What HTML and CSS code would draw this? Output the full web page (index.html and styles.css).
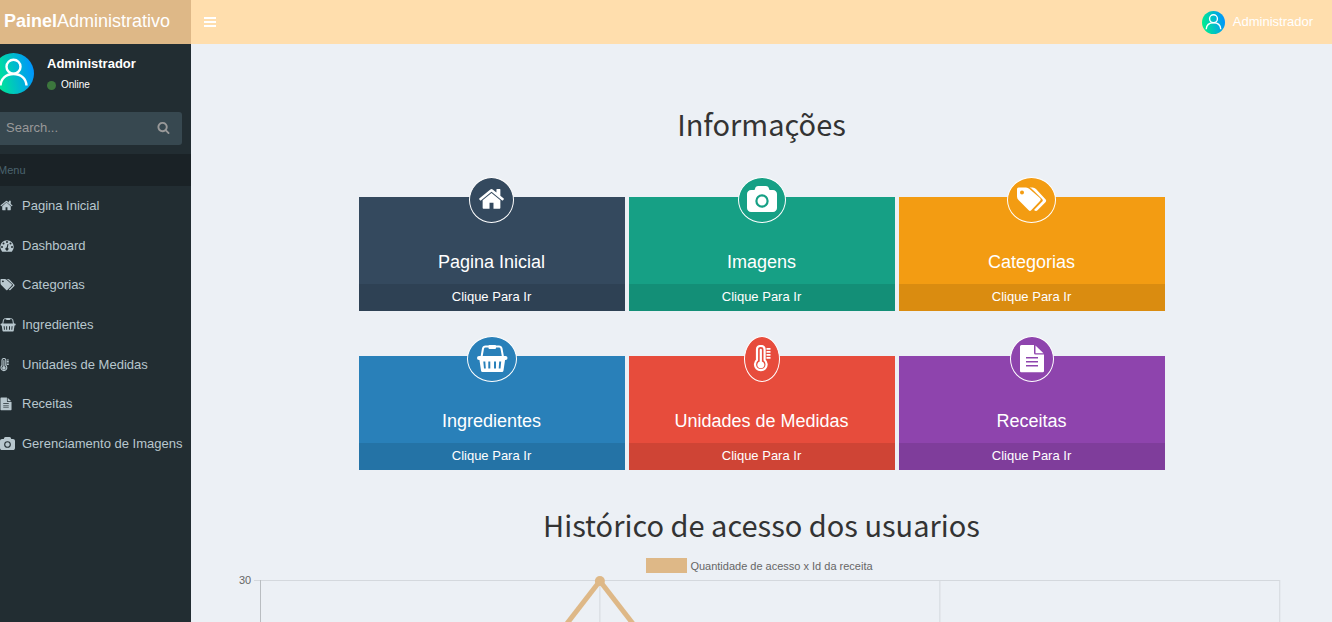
FILE: index.html
```html
<!DOCTYPE html>
<html lang="pt-BR">
<head>
<meta charset="utf-8">
<meta name="viewport" content="width=device-width, initial-scale=1">
<title>Painel Administrativo</title>
<link rel="stylesheet" href="styles.css">
</head>
<body>
<svg class="defs" aria-hidden="true">
  <defs>
    <linearGradient id="avatar-fill" x1="0" y1="0.6" x2="1" y2="0.4">
      <stop offset="0" stop-color="#00ef8b"/>
      <stop offset="1" stop-color="#0093ff"/>
    </linearGradient>
    <symbol id="avatar" viewBox="0 0 41 41">
      <circle cx="20.5" cy="20.5" r="20.5" fill="url(#avatar-fill)"/>
      <g fill="none" stroke="#fff" stroke-width="2.400"><circle cx="20.5" cy="13.700" r="7"/><path d="M7.500 32.500C8 25.500 13 21 20.500 21S33 25.500 33.500 32.500"/></g>
    </symbol>
    <symbol id="home" viewBox="18 58 1755 1820">
      <path d="M1472 992v480q0 26-19 45t-45 19h-384v-384h-256v384h-384q-26 0-45-19t-19-45v-480q0-1 .5-3t.5-3l575-474 575 474q1 2 1 6zm223-69l-62 74q-8 9-21 11h-3q-13 0-21-7l-692-577-692 577q-12 8-24 7-13-2-21-11l-62-74q-8-10-7-23.500t11-21.500l719-599q32-26 76-26t76 26l244 204v-195q0-14 9-23t23-9h192q14 0 23 9t9 23v408l219 182q10 8 11 21.500t-7 23.500z"/>
    </symbol>
    <symbol id="camera" viewBox="-64 128 1920 1792">
      <path fill-rule="evenodd" d="M1600 384q106 0 181 75t75 181v896q0 106-75 181t-181 75h-1408q-106 0-181-75t-75-181v-896q0-106 75-181t181-75h224l51-136q19-49 69.500-84.500t103.500-35.500h512q53 0 103.500 35.500t69.500 84.500l51 136zM896 660a428 428 0 1 0 0 856a428 428 0 1 0 0-856zM896 800a288 288 0 1 1 0 576a288 288 0 1 1 0-576z"/>
    </symbol>
    <symbol id="tags" viewBox="0 0 31 28">
      <path fill-rule="evenodd" d="M2.500 1.500H10Q12 1.500 13.500 3L24.200 12.300Q25.300 13.500 24.200 14.800L15.200 24.300Q14 25.500 12.700 24.300L2.500 14Q1 12.500 1 10.500V3Q1 1.500 2.500 1.500zM6 4.500a2 2 0 1 0 0 4a2 2 0 1 0 0-4z"/>
      <path d="M13.500 1.500H16.500Q18.500 1.500 20 3L29.700 13.500Q30.700 14.700 29.700 16L21.500 24.300Q20 25.600 18 24L26.500 15.300Q27.300 14.300 26.300 13.200L17 4Q15.500 2.200 13.500 1.500z"/>
    </symbol>
    <symbol id="basket" viewBox="0 0 32 28">
      <path fill="none" stroke="currentColor" stroke-width="2" d="M5.500 12L7 3.500Q7.500 1.500 9.500 1.500H23Q25 1.500 25.500 3.500L27 12"/>
      <rect x="12.500" y="0" width="7.500" height="4" rx="1"/>
      <rect x="1" y="11" width="30.500" height="4" rx="2"/>
      <path fill-rule="evenodd" d="M3.300 14H29.200L27.500 25.500Q27.300 27 26 27H6.500Q5.200 27 5 25.500zM7.300 16.500L8 23.500H9.800L9.300 16.500zM12.300 16.500V23.500H14.300V16.500zM18 16.500V23.500H20V16.500zM23.200 16.500L22.700 23.500H24.500L25.200 16.500z"/>
    </symbol>
    <symbol id="thermometer" viewBox="0 0 18 28">
      <path fill="none" stroke="currentColor" stroke-width="2.200" d="M4 15V4.500Q4 1 7.800 1T11.600 4.500V15A5.800 5.800 0 1 1 4 15z"/>
      <path d="M6.700 5Q6.700 3.800 7.800 3.800T8.900 5V16.500A3.500 3.500 0 1 1 6.700 16.500zM13.500 3H17.500V4.800H13.500zM13.500 6H17.500V7.800H13.500zM13.500 9H17.500V10.800H13.500zM13.500 12H17.500V13.800H13.500z"/>
    </symbol>
    <symbol id="file" viewBox="0 0 26 28">
      <path fill-rule="evenodd" d="M2.500 0H15V8Q15 9.500 16.500 9.500H25V26Q25 27.300 23.700 27.300H2.300Q1 27.300 1 26V1.500Q1 0 2.500 0zM7 12V13.500H19V12zM7 16V17.500H19V16zM7 20V21.500H19V20z"/>
      <path d="M16.500 .5L24.500 8.200H16.500z"/>
    </symbol>
    <symbol id="dashboard" viewBox="0 0 28 28">
      <path fill-rule="evenodd" d="M4 25A13.500 13.500 0 1 1 24 25Q23.500 25.500 22.800 25.500H5.200Q4.500 25.500 4 25zM4 14a2 2 0 1 0 0 4a2 2 0 1 0 0-4zM7 7a2 2 0 1 0 0 4a2 2 0 1 0 0-4zM14 4a2 2 0 1 0 0 4a2 2 0 1 0 0-4zM21 7a2 2 0 1 0 0 4a2 2 0 1 0 0-4zM24 14a2 2 0 1 0 0 4a2 2 0 1 0 0-4zM15 10L13.300 17A3 3 0 1 0 15.500 17.500L17 10.500z"/>
    </symbol>
    <symbol id="search" viewBox="0 0 1792 1792">
      <path d="M1216 832q0-185-131.500-316.500t-316.500-131.500-316.500 131.500-131.500 316.500 131.500 316.500 316.500 131.500 316.500-131.500 131.500-316.500zm512 832q0 52-38 90t-90 38q-54 0-90-38l-343-342q-179 124-399 124-143 0-273.500-55.500t-225-150-150-225-55.500-273.500 55.500-273.500 150-225 225-150 273.500-55.500 273.500 55.500 225 150 150 225 55.500 273.500q0 220-124 399l343 343q37 37 37 90z"/>
    </symbol>
    <symbol id="bars" viewBox="0 0 12 10">
      <path d="M0 0H12V2H0zM0 4H12V6H0zM0 8H12V10H0z"/>
    </symbol>
  </defs>
</svg>

<div class="app">
  <a class="brand" href="#"><b>Painel</b>Administrativo</a>
  <header class="topbar">
    <button class="toggle" type="button" aria-label="Alternar menu"><svg width="12" height="10"><use href="#bars"/></svg></button>
    <a class="account" href="#"><svg width="23" height="23"><use href="#avatar"/></svg>Administrador</a>
  </header>

  <aside class="sidebar">
    <div class="user">
      <svg class="user-photo" width="41" height="41"><use href="#avatar"/></svg>
      <div class="user-info">
        <strong>Administrador</strong>
        <span class="status">Online</span>
      </div>
    </div>
    <form class="search">
      <input type="text" placeholder="Search..." aria-label="Search">
      <button type="button" aria-label="Buscar"><svg width="13" height="13"><use href="#search"/></svg></button>
    </form>
    <div class="menu-title">Menu</div>
    <nav class="menu">
      <a href="#"><svg width="13" height="14"><use href="#home"/></svg>Pagina Inicial</a>
      <a href="#"><svg width="14" height="14"><use href="#dashboard"/></svg>Dashboard</a>
      <a href="#"><svg width="15" height="14"><use href="#tags"/></svg>Categorias</a>
      <a href="#"><svg width="16" height="14"><use href="#basket"/></svg>Ingredientes</a>
      <a href="#"><svg width="9" height="14"><use href="#thermometer"/></svg>Unidades de Medidas</a>
      <a href="#"><svg width="12" height="14"><use href="#file"/></svg>Receitas</a>
      <a href="#"><svg width="15" height="14"><use href="#camera"/></svg>Gerenciamento de Imagens</a>
    </nav>
  </aside>

  <main class="content">
    <h1>Informações</h1>
    <section class="cards">
      <a class="card navy" href="#"><span class="badge"><svg width="27" height="28"><use href="#home"/></svg></span><span class="card-title">Pagina Inicial</span><span class="card-action">Clique Para Ir</span></a>
      <a class="card green" href="#"><span class="badge"><svg width="30" height="28"><use href="#camera"/></svg></span><span class="card-title">Imagens</span><span class="card-action">Clique Para Ir</span></a>
      <a class="card orange" href="#"><span class="badge"><svg width="31" height="28"><use href="#tags"/></svg></span><span class="card-title">Categorias</span><span class="card-action">Clique Para Ir</span></a>
      <a class="card blue" href="#"><span class="badge"><svg width="32" height="28"><use href="#basket"/></svg></span><span class="card-title">Ingredientes</span><span class="card-action">Clique Para Ir</span></a>
      <a class="card red" href="#"><span class="badge"><svg width="18" height="28"><use href="#thermometer"/></svg></span><span class="card-title">Unidades de Medidas</span><span class="card-action">Clique Para Ir</span></a>
      <a class="card purple" href="#"><span class="badge"><svg width="26" height="28"><use href="#file"/></svg></span><span class="card-title">Receitas</span><span class="card-action">Clique Para Ir</span></a>
    </section>

    <h2>Histórico de acesso dos usuarios</h2>
    <section class="chart">
      <div class="legend"><span class="swatch"></span>Quantidade de acesso x Id da receita</div>
      <div class="chart-body">
        <span class="tick">30</span>
        <svg class="plot" role="img" aria-label="Quantidade de acesso x Id da receita">
          <g class="grid-lines">
            <path d="M-6 .5H0"/>
            <line x1="0" y1=".5" x2="100%" y2=".5"/>
            <line x1="33.330%" y1="0" x2="33.330%" y2="100%"/>
            <line x1="66.670%" y1="0" x2="66.670%" y2="100%"/>
            <line x1="100%" y1="0" x2="100%" y2="100%"/>
          </g>
          <line class="axis" x1=".5" y1="0" x2=".5" y2="100%"/>
          <g class="series">
            <line x1="0" y1="440" x2="33.330%" y2="1"/>
            <line x1="33.330%" y1="1" x2="66.670%" y2="440"/>
            <circle cx="33.330%" cy="1" r="5"/>
          </g>
        </svg>
      </div>
    </section>
  </main>
</div>
</body>
</html>
```
FILE: styles.css
```css
* {
  box-sizing: border-box;
}

body {
  margin: 0;
  font: 13px/18px "Liberation Sans", Arial, sans-serif;
  color: #333;
  background: #ecf0f5;
}

a {
  color: inherit;
  text-decoration: none;
}

button {
  border: 0;
  padding: 0;
  background: none;
  color: inherit;
  cursor: pointer;
}

svg {
  display: block;
  flex: none;
  fill: currentColor;
}

.defs {
  position: absolute;
  width: 0;
  height: 0;
}

.app {
  display: grid;
  grid-template: 44px minmax(0, 1fr) / 191px minmax(0, 1fr);
  height: 100vh;
}

.brand {
  padding-left: 4px;
  background: #deb887;
  color: #fff;
  font-size: 18px;
  line-height: 42px;
  white-space: nowrap;
}

.topbar {
  display: flex;
  align-items: center;
  justify-content: space-between;
  padding: 0 19px 0 13px;
  background: #ffdead;
  color: #fff;
}

.account {
  display: flex;
  align-items: center;
  gap: 8px;
}

.sidebar {
  overflow: hidden;
  background: #222d32;
  color: #b8c7ce;
}

.user {
  display: flex;
  gap: 13px;
  height: 68px;
  padding-top: 9px;
  color: #fff;
}

.user-photo {
  margin-left: -7px;
}

.user-info {
  display: flex;
  flex-direction: column;
  gap: 3px;
  padding-top: 2px;
}

.status {
  display: flex;
  align-items: center;
  gap: 5px;
  font-size: 10px;
}

.status::before {
  content: "";
  width: 9px;
  height: 9px;
  border-radius: 50%;
  background: #3c763d;
}

.search {
  display: flex;
  align-items: center;
  height: 33px;
  margin: 0 9px 9px 0;
  padding: 0 12px 2px 0;
  border-radius: 0 3px 3px 0;
  background: #374850;
  color: #999;
}

.search input {
  flex: 1;
  min-width: 0;
  padding: 0 6px;
  border: 0;
  outline: 0;
  background: none;
  color: #fff;
  font: inherit;
}

.search input::placeholder {
  color: #999;
  opacity: 1;
}

.menu-title {
  height: 32px;
  margin-left: -2px;
  background: #1a2226;
  color: #4b646f;
  font-size: 11px;
  line-height: 33px;
}

.menu {
  display: grid;
  grid-auto-rows: 1fr;
  height: 278px;
}

.menu a {
  display: grid;
  grid-template-columns: 22px 1fr;
  align-items: center;
  white-space: nowrap;
}

.content {
  overflow: hidden auto;
  scrollbar-width: none;
  padding: 57px 30px 0;
  text-align: center;
}

h1,
h2 {
  margin: 0;
  font: 400 29px/44px "Source Sans Pro", "Noto Sans CJK SC", sans-serif;
}

.cards {
  display: grid;
  grid-template-columns: repeat(3, minmax(0, 1fr));
  gap: 45px 4px;
  max-width: 806px;
  margin: 52px auto 32px;
}

.card {
  display: flex;
  flex-direction: column;
  align-items: center;
  background: var(--tone);
  color: #fff;
}

.badge {
  margin-top: -20px;
  padding: 8px;
  border: 1px solid #fff;
  border-radius: 50%;
  background: var(--tone);
}

.card-title {
  padding: 29px 0 11px;
  font-size: 18px;
  line-height: 21px;
}

.card-action {
  align-self: stretch;
  padding-bottom: 2px;
  background: rgba(0, 0, 0, 0.1);
  line-height: 25px;
}

.navy { --tone: #34495e; }
.green { --tone: #16a085; }
.orange { --tone: #f39c12; }
.blue { --tone: #2980b9; }
.red { --tone: #e74c3c; }
.purple { --tone: #8e44ad; }

.chart {
  padding: 12px 22px 0 18px;
  color: #666;
  font-size: 11px;
}

.legend {
  display: flex;
  align-items: center;
  justify-content: center;
  gap: 3px;
  height: 15px;
  margin-bottom: 7px;
}

.swatch {
  width: 41px;
  height: 15px;
  background: #deb887;
}

.chart-body {
  display: flex;
  gap: 9px;
}

.tick {
  line-height: 1px;
}

.plot {
  flex: 1;
  min-width: 0;
  height: 420px;
  overflow: visible;
}

.grid-lines {
  stroke: #d4d8dd;
}

.axis {
  stroke: #b9bdc1;
}

.series {
  fill: #deb887;
  stroke: #deb887;
  stroke-width: 5px;
}

.series circle {
  stroke: none;
}
```
